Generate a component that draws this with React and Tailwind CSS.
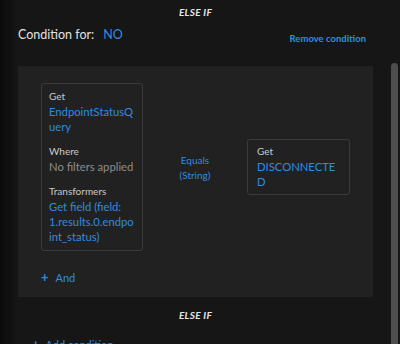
import React from "react";

const Label = ({ children }) => (
  <div className="text-[10px] leading-[15px] text-[#c9c9c9]">{children}</div>
);

const Value = ({ children, muted }) => (
  <div
    className={
      "text-[11.25px] leading-[15px] [overflow-wrap:anywhere] " +
      (muted ? "text-[#8d8d8d]" : "text-[#2f8ce0]")
    }
  >
    {children}
  </div>
);

const App = () => {
  return (
    <div
      className="flex w-[400px] h-[344px] overflow-hidden bg-[linear-gradient(to_right,#0a0a0a,#161616_17px)] text-[#e2e2e2]"
      style={{ fontFamily: "Lato, 'Open Sans', sans-serif" }}
    >
      <div className="flex-1 flex flex-col px-[18px]">
        {/* header */}
        <div className="pt-[5px] text-center text-[10px] leading-[14px] font-bold italic tracking-[0.3px] text-[#e6e6e6]">
          ELSE IF
        </div>

        <div className="flex items-start justify-between mt-[8px] h-[20px]">
          <div className="flex items-center gap-[9px] text-[12.5px] leading-[16px]">
            <span>Condition for:</span>
            <span className="text-[#2f8ce0]">NO</span>
          </div>
          <button className="mt-[5px] mr-[7px] text-[9.5px] leading-[14px] font-bold text-[#2f8ce0]">
            Remove condition
          </button>
        </div>

        {/* condition panel */}
        <div className="mt-[20px] bg-[#212121] pl-[23px] pr-[23px] pt-[17px] pb-[12px]">
          <div className="flex items-center">
            <div className="w-[102px] border border-[#3b3b3b] rounded-[3px] pl-[7px] pr-[6.5px] pt-[5px] pb-[6px]">
              <Label>Get</Label>
              <Value>EndpointStatusQuery</Value>
              <div className="mt-[10px]">
                <Label>Where</Label>
                <Value muted>No filters applied</Value>
              </div>
              <div className="mt-[10px]">
                <Label>Transformers</Label>
                <Value>Get field (field: 1.results.0.endpoint_status)</Value>
              </div>
            </div>

            <div className="flex-1 text-center text-[10px] leading-[15px] text-[#2f8ce0] pt-[2px]">
              Equals
              <br />
              (String)
            </div>

            <div className="w-[103px] border border-[#3b3b3b] rounded-[3px] px-[9px] pt-[4px] pb-[5px]">
              <Label>Get</Label>
              <Value>DISCONNECTED</Value>
            </div>
          </div>

          <button className="flex items-center gap-[7px] mt-[19px] text-[11px] leading-[15px] text-[#2f8ce0]">
            <span className="font-bold text-[13px] leading-[15px]">+</span>
            <span>And</span>
          </button>
        </div>

        <div className="mt-[11px] text-center text-[10px] leading-[14px] font-bold italic tracking-[0.3px] text-[#e6e6e6]">
          ELSE IF
        </div>

        <button className="flex items-center gap-[6px] mt-[15px] ml-[14px] text-[11px] leading-[15px] text-[#2f8ce0]">
          <span className="font-bold text-[13px] leading-[15px]">+</span>
          <span>Add condition</span>
        </button>
      </div>

      {/* scrollbar */}
      <div className="w-[9px] flex pt-[63px] pr-[2px] bg-[#161616]">
        <div className="w-[7px] flex-1 rounded-t-[4px] bg-[#4e4e4e]" />
      </div>
    </div>
  );
};

export default App;
